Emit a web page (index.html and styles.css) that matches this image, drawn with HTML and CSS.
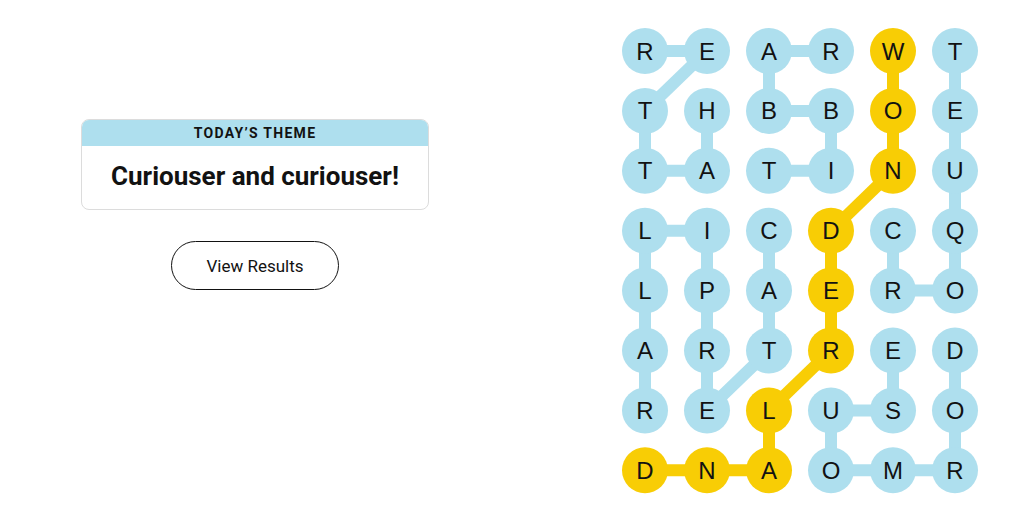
FILE: index.html
```html
<!DOCTYPE html>
<html lang="en">
<head>
    <meta charset="UTF-8">
    <meta name="viewport" content="width=device-width, initial-scale=1.0">
    <title>Strands</title>
    <link rel="stylesheet" href="styles.css">
</head>
<body>
    <div class="page">
        <div class="summary">
            <div class="theme-card">
                <div class="theme-label">TODAY’S THEME</div>
                <div class="theme-text">Curiouser and curiouser!</div>
            </div>
            <button class="results-btn">View Results</button>
        </div>

        <div class="board-wrap">
            <svg id="board" class="board" width="360" height="470" viewBox="0 0 360 470"></svg>
        </div>
    </div>

    <script>
        const rows = ['REARWT', 'THBBOE', 'TATINU', 'LICDCQ', 'LPAERO', 'ARTRED', 'RELUSO', 'DNAOMR'];

        // spangram path, in order
        const spangram = [[0,4],[1,4],[2,4],[3,3],[4,3],[5,3],[6,2],[7,2],[7,1],[7,0]];

        // links between letters of the found words
        const links = [
            [0,0,0,1], [0,1,1,0], [1,0,2,0], [2,0,2,1], [2,1,1,1],
            [0,3,0,2], [0,2,1,2], [1,2,1,3], [1,3,2,3], [2,3,2,2],
            [3,4,4,4], [4,4,4,5], [4,5,3,5], [3,5,2,5], [2,5,1,5], [1,5,0,5],
            [3,2,4,2], [4,2,5,2], [5,2,6,1], [6,1,5,1], [5,1,4,1], [4,1,3,1],
            [3,1,3,0], [3,0,4,0], [4,0,5,0], [5,0,6,0],
            [5,5,6,5], [6,5,7,5], [7,5,7,4], [7,4,7,3], [7,3,6,3], [6,3,6,4], [6,4,5,4]
        ];

        const svg = document.getElementById('board');
        const NS = 'http://www.w3.org/2000/svg';
        const R = 23;
        const cx = c => R + c * 62;
        const cy = r => R + r * 59.9;
        const isSpan = (r, c) => spangram.some(p => p[0] === r && p[1] === c);

        function add(tag, attrs, cls) {
            const el = document.createElementNS(NS, tag);
            for (const k in attrs) el.setAttribute(k, attrs[k]);
            if (cls) el.setAttribute('class', cls);
            svg.appendChild(el);
            return el;
        }

        links.forEach(([r1, c1, r2, c2]) => {
            add('line', { x1: cx(c1), y1: cy(r1), x2: cx(c2), y2: cy(r2) }, 'link');
        });
        for (let i = 1; i < spangram.length; i++) {
            const [r1, c1] = spangram[i - 1];
            const [r2, c2] = spangram[i];
            add('line', { x1: cx(c1), y1: cy(r1), x2: cx(c2), y2: cy(r2) }, 'link span');
        }

        rows.forEach((row, r) => {
            row.split('').forEach((ch, c) => {
                add('circle', { cx: cx(c), cy: cy(r), r: R }, isSpan(r, c) ? 'cell span' : 'cell');
                const t = add('text', { x: cx(c), y: cy(r) + 8.5 }, 'letter');
                t.textContent = ch;
            });
        });
    </script>
</body>
</html>
```

FILE: styles.css
```css
body {
    margin: 0;
    background: #fff;
    font-family: "Liberation Sans", Arial, sans-serif;
    color: #121212;
}
.page {
    display: flex;
    height: 527px;
}
.summary {
    width: 510px;
    padding-top: 119px;
    display: flex;
    flex-direction: column;
    align-items: center;
}
.theme-card {
    width: 348px;
    border: 1px solid #dcdcdc;
    border-radius: 8px;
    overflow: hidden;
    box-sizing: border-box;
}
.theme-label {
    background: #aedfee;
    height: 26px;
    line-height: 27px;
    text-align: center;
    font-family: Roboto, sans-serif;
    font-weight: bold;
    font-size: 14px;
    letter-spacing: 1.3px;
}
.theme-text {
    height: 63px;
    line-height: 61px;
    text-align: center;
    font-family: Roboto, sans-serif;
    font-weight: bold;
    font-size: 26px;
    letter-spacing: 0;
}
.results-btn {
    margin-top: 31px;
    width: 168px;
    height: 49px;
    border: 1px solid #121212;
    border-radius: 25px;
    background: #fff;
    color: #121212;
    font-family: Roboto, sans-serif;
    font-size: 17px;
    cursor: pointer;
}
.board-wrap {
    margin-left: 112px;
    padding-top: 28px;
}
.board {
    display: block;
}
.link {
    stroke: #aedfee;
    stroke-width: 12;
}
.link.span {
    stroke: #f8cd05;
}
.cell {
    fill: #aedfee;
}
.cell.span {
    fill: #f8cd05;
}
.letter {
    font-family: "Liberation Sans", Arial, sans-serif;
    font-size: 24px;
    fill: #121212;
    text-anchor: middle;
}
```
